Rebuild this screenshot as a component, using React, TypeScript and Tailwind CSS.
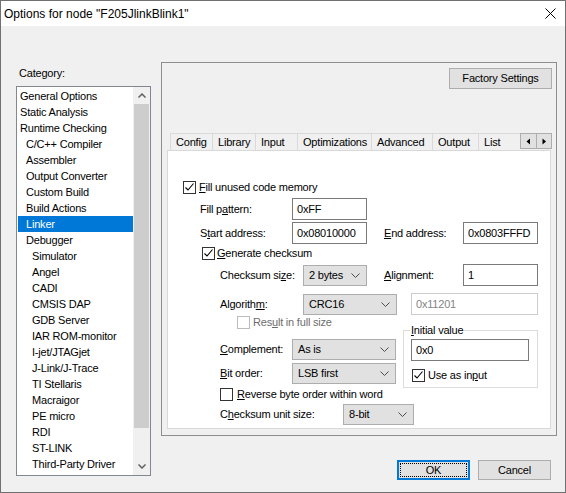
import { ReactNode } from 'react'

type Item = { label: string; level: 0 | 1 | 2; selected?: boolean }

const CATEGORIES: Item[] = [
  { label: 'General Options', level: 0 },
  { label: 'Static Analysis', level: 0 },
  { label: 'Runtime Checking', level: 0 },
  { label: 'C/C++ Compiler', level: 1 },
  { label: 'Assembler', level: 1 },
  { label: 'Output Converter', level: 1 },
  { label: 'Custom Build', level: 1 },
  { label: 'Build Actions', level: 1 },
  { label: 'Linker', level: 1, selected: true },
  { label: 'Debugger', level: 1 },
  { label: 'Simulator', level: 2 },
  { label: 'Angel', level: 2 },
  { label: 'CADI', level: 2 },
  { label: 'CMSIS DAP', level: 2 },
  { label: 'GDB Server', level: 2 },
  { label: 'IAR ROM-monitor', level: 2 },
  { label: 'I-jet/JTAGjet', level: 2 },
  { label: 'J-Link/J-Trace', level: 2 },
  { label: 'TI Stellaris', level: 2 },
  { label: 'Macraigor', level: 2 },
  { label: 'PE micro', level: 2 },
  { label: 'RDI', level: 2 },
  { label: 'ST-LINK', level: 2 },
  { label: 'Third-Party Driver', level: 2 },
]

const TABS = [
  { label: 'Config', w: 'w-[42px]' },
  { label: 'Library', w: 'w-[43px]' },
  { label: 'Input', w: 'w-[42px]' },
  { label: 'Optimizations', w: 'w-[74px]' },
  { label: 'Advanced', w: 'w-[61px]' },
  { label: 'Output', w: 'w-[46px]' },
  { label: 'List', w: 'w-[42px]' },
]

const indent = { 0: 'pl-[2px]', 1: 'pl-[8px]', 2: 'pl-[14px]' }

function Check({ checked, disabled }: { checked?: boolean; disabled?: boolean }) {
  return (
    <div
      className={`w-[13px] h-[13px] shrink-0 border bg-white flex items-center justify-center ${
        disabled ? 'border-[#bcbcbc]' : 'border-[#333333]'
      }`}
    >
      {checked && (
        <svg width="11" height="11" viewBox="0 0 11 11">
          <path d="M1.5 5.5 L4 8 L9.5 1.5" fill="none" stroke="#000" strokeWidth="1.1" />
        </svg>
      )}
    </div>
  )
}

function Chevron() {
  return (
    <svg width="9" height="5" viewBox="0 0 9 5">
      <path d="M0.5 0.5 L4.5 4.5 L8.5 0.5" fill="none" stroke="#4d4d4d" strokeWidth="1" />
    </svg>
  )
}

function Select({ value, className }: { value: string; className: string }) {
  return (
    <div
      className={`h-[21px] shrink-0 border border-[#adadad] bg-[#e1e1e1] flex items-center justify-between pl-[5px] pr-[6px] ${className}`}
    >
      <span>{value}</span>
      <Chevron />
    </div>
  )
}

function Edit({ value, className, disabled }: { value: string; className: string; disabled?: boolean }) {
  return (
    <div
      className={`h-[22px] shrink-0 bg-white flex items-center pl-[4px] border ${
        disabled ? 'border-[#cccccc] text-[#838383]' : 'border-[#7a7a7a]'
      } ${className}`}
    >
      {value}
    </div>
  )
}

function ScrollArrow({ up }: { up?: boolean }) {
  return (
    <div className="h-[17px] flex items-center justify-center">
      <svg width="8" height="5" viewBox="0 0 8 5">
        <path
          d={up ? 'M0.5 4.5 L4 1 L7.5 4.5' : 'M0.5 0.5 L4 4 L7.5 0.5'}
          fill="none"
          stroke="#606060"
          strokeWidth="1.5"
        />
      </svg>
    </div>
  )
}

function Row({ children, className }: { children: ReactNode; className: string }) {
  return <div className={`flex items-center ${className}`}>{children}</div>
}

export default function App() {
  return (
    <div className="w-[566px] h-[493px] border border-[#707070] flex flex-col font-['Liberation_Sans',Arial,sans-serif] text-[11px] text-black">
      {/* Title bar */}
      <div className="h-[25px] bg-white flex items-center justify-between pl-[3px]">
        <span className="text-[12px]">Options for node "F205JlinkBlink1"</span>
        <svg width="11" height="11" viewBox="0 0 11 11" className="mr-[9px]">
          <path d="M0.5 0.5 L10.5 10.5 M10.5 0.5 L0.5 10.5" stroke="#000" strokeWidth="1" />
        </svg>
      </div>

      <div className="flex-1 bg-[#f0f0f0] flex pl-[15px] tracking-[-0.2px]">
        {/* Category */}
        <div className="w-[135px] flex flex-col">
          <div className="mt-[41px] h-[13px] leading-[13px] pl-[3px]">Category:</div>
          <div className="mt-[6px] h-[390px] border border-[#828790] bg-white flex">
            <div className="flex-1 pt-[1px] pl-[1px]">
              {CATEGORIES.map(c => (
                <div
                  key={c.label}
                  className={`h-[16px] leading-[16px] whitespace-nowrap ${indent[c.level]} ${
                    c.selected ? 'bg-[#0078d7] text-white' : ''
                  }`}
                >
                  {c.label}
                </div>
              ))}
            </div>
            <div className="w-[17px] bg-[#f0f0f0] flex flex-col">
              <ScrollArrow up />
              <div className="h-[324px] mx-[1px] bg-[#cdcdcd]" />
              <div className="flex-1" />
              <ScrollArrow />
            </div>
          </div>
        </div>

        {/* Options panel */}
        <div className="ml-[10px] w-[396px] flex flex-col">
          <div className="mt-[36px] h-[374px] border border-[#8e8e8e] flex flex-col">
            <button className="self-end mr-[4px] mt-[5px] w-[103px] h-[21px] border border-[#adadad] bg-[#e1e1e1]">
              Factory Settings
            </button>

            <div className="mt-[44px] ml-[8px] h-[17px] flex">
              {TABS.map(t => (
                <div
                  key={t.label}
                  className={`${t.w} h-[17px] border-t border-l border-[#d9d9d9] bg-[#f0f0f0] leading-[16px] pl-[5px] whitespace-nowrap`}
                >
                  {t.label}
                </div>
              ))}
              <div className="flex h-[16px]">
                {['M4 0.5 L0.5 3.5 L4 6.5 Z', 'M0.5 0.5 L4 3.5 L0.5 6.5 Z'].map(d => (
                  <div
                    key={d}
                    className="w-[16px] h-[16px] border border-[#adadad] bg-[#e1e1e1] flex items-center justify-center first:border-r-0"
                  >
                    <svg width="5" height="7" viewBox="0 0 5 7">
                      <path d={d} fill="#000" />
                    </svg>
                  </div>
                ))}
              </div>
            </div>

            <div className="ml-[5px] w-[384px] h-[279px] border border-[#d9d9d9] bg-white flex flex-col">
              <Row className="mt-[30px] ml-[15px] h-[13px] gap-[3px]">
                <Check checked />
                <span>
                  <span className="underline">F</span>ill unused code memory
                </span>
              </Row>

              <Row className="mt-[4px] ml-[32px] h-[22px]">
                <span className="w-[92px]">
                  Fill p<span className="underline">a</span>ttern:
                </span>
                <Edit value="0xFF" className="w-[75px]" />
              </Row>

              <Row className="mt-[2px] ml-[32px] h-[22px]">
                <span className="w-[92px]">
                  S<span className="underline">t</span>art address:
                </span>
                <Edit value="0x08010000" className="w-[75px]" />
                <span className="ml-[17px] w-[79px]">
                  <span className="underline">E</span>nd address:
                </span>
                <Edit value="0x0803FFFD" className="w-[75px]" />
              </Row>

              <Row className="mt-[3px] ml-[34px] h-[13px] gap-[2px]">
                <Check checked />
                <span>
                  <span className="underline">G</span>enerate checksum
                </span>
              </Row>

              <Row className="mt-[4px] ml-[52px] h-[22px]">
                <span className="w-[83px]">
                  Checksum si<span className="underline">z</span>e:
                </span>
                <Select value="2 bytes" className="w-[64px]" />
                <span className="ml-[17px] w-[79px]">
                  <span className="underline">A</span>lignment:
                </span>
                <Edit value="1" className="w-[75px]" />
              </Row>

              <Row className="mt-[7px] ml-[52px] h-[22px]">
                <span className="w-[83px]">
                  Algorith<span className="underline">m</span>:
                </span>
                <Select value="CRC16" className="w-[94px]" />
                <Edit value="0x11201" className="ml-[14px] w-[127px]" disabled />
              </Row>

              <div className="mt-[1px] flex">
                <div className="w-[235px] flex flex-col">
                  <Row className="ml-[69px] h-[13px] gap-[3px] text-[#6d6d6d]">
                    <Check disabled />
                    <span>
                      Res<span className="underline">u</span>lt in full size
                    </span>
                  </Row>
                  <Row className="mt-[10px] ml-[52px] h-[21px]">
                    <span className="w-[72px]">
                      <span className="underline">C</span>omplement:
                    </span>
                    <Select value="As is" className="w-[104px]" />
                  </Row>
                  <Row className="mt-[3px] ml-[52px] h-[21px]">
                    <span className="w-[72px]">
                      <span className="underline">B</span>it order:
                    </span>
                    <Select value="LSB first" className="w-[104px]" />
                  </Row>
                </div>

                <fieldset className="mt-[8px] w-[135px] border border-[#dcdcdc] pl-[7px] pb-[5px]">
                  <legend className="leading-[13px] px-[1px] -ml-[1px]">
                    <span className="underline">I</span>nitial value
                  </legend>
                  <Edit value="0x0" className="mt-[2px] w-[118px]" />
                  <Row className="mt-[8px] ml-[1px] h-[13px] gap-[3px]">
                    <Check checked />
                    <span>
                      Use as in<span className="underline">p</span>ut
                    </span>
                  </Row>
                </fieldset>
              </div>

              <Row className="ml-[52px] h-[13px] gap-[4px]">
                <Check />
                <span>
                  <span className="underline">R</span>everse byte order within word
                </span>
              </Row>

              <Row className="mt-[3px] ml-[52px] h-[21px]">
                <span className="w-[123px]">
                  C<span className="underline">h</span>ecksum unit size:
                </span>
                <Select value="8-bit" className="w-[71px]" />
              </Row>
            </div>
          </div>

          {/* Dialog buttons */}
          <div className="mt-[24px] flex justify-end gap-[8px] pr-[6px]">
            <button className="w-[73px] h-[20px] border-2 border-[#0078d7] bg-[#e1e1e1] flex p-[1px]">
              <span className="flex-1 border border-dotted border-black flex items-center justify-center">OK</span>
            </button>
            <button className="w-[73px] h-[20px] border border-[#adadad] bg-[#e1e1e1]">Cancel</button>
          </div>
        </div>
      </div>
    </div>
  )
}
